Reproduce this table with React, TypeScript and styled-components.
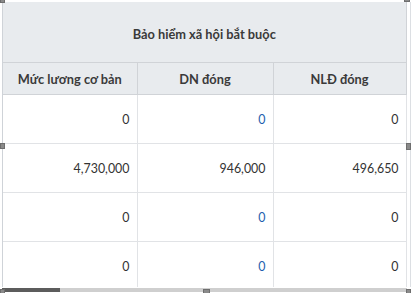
import styled, { createGlobalStyle } from 'styled-components';

const Global = createGlobalStyle`
    html, body {
        margin: 0;
        padding: 0;
        background: #ffffff;
    }
    body {
        font-family: Lato, "Open Sans", Arial, sans-serif;
        color: #333333;
    }
`;

const Frame = styled.div`
    position: relative;
    width: 411px;
    height: 293px;
    overflow: hidden;
    display: flex;
    flex-direction: column;
    padding-top: 2px;
    box-sizing: border-box;
`;

const Body = styled.div`
    display: flex;
    flex: 1;
    min-height: 0;
`;

const Viewport = styled.div`
    width: 404px;
    margin-left: 2px;
    border-left: 1px solid #cfd3d8;
    overflow: hidden;
`;

const SideStrip = styled.div`
    width: 2px;
    margin-left: 1px;
    border-right: 1px solid #dcdfe3;
`;

const Table = styled.table`
    border-collapse: collapse;
    table-layout: fixed;
    width: 403px;
    font-size: 13px;
`;

const HeadCell = styled.th<{ $tall?: boolean }>`
    background: #e8ebee;
    color: #3a3a3a;
    font-weight: 700;
    font-size: 12.8px;
    text-align: center;
    height: ${(p) => (p.$tall ? '57px' : '31px')};
    padding: ${(p) => (p.$tall ? '3px 4px 0' : '0 4px')};
    border: 1px solid #d0d3d7;
    border-top: none;
    border-left: none;
`;

const Cell = styled.td<{ $link?: boolean }>`
    text-align: right;
    height: 47px;
    padding: 1px 7px 0 4px;
    font-size: 12.4px;
    border: 1px solid #e1e3e6;
    border-top: none;
    border-left: none;
    color: ${(p) => (p.$link ? '#1f5fae' : '#333333')};
`;

const ScrollTrack = styled.div`
    height: 4px;
    margin: 1px 4px 1px 2px;
    background: #cfcfcf;
    display: flex;
`;

const ScrollThumb = styled.div`
    width: 58px;
    background: #5c5c5c;
`;

const Handle = styled.div<{ $x: number; $y: number; $w: number; $h: number }>`
    position: absolute;
    left: ${(p) => p.$x}px;
    top: ${(p) => p.$y}px;
    width: ${(p) => p.$w}px;
    height: ${(p) => p.$h}px;
    background: #8a8a8a;
    border: 1px solid #6e6e6e;
    box-sizing: border-box;
`;

const rows = [
    ['0', '0', '0'],
    ['4,730,000', '946,000', '496,650'],
    ['0', '0', '0'],
    ['0', '0', '0'],
];

const handles = [
    { x: 0, y: -2, w: 5, h: 5 },
    { x: 404, y: -3, w: 6, h: 5 },
    { x: 0, y: 143, w: 5, h: 6 },
    { x: 406, y: 143, w: 5, h: 7 },
    { x: 0, y: 289, w: 5, h: 6 },
    { x: 203, y: 289, w: 7, h: 6 },
    { x: 406, y: 289, w: 5, h: 6 },
];

export default function App() {
    return (
        <>
            <Global />
            <Frame>
                <Body>
                    <Viewport>
                        <Table>
                            <colgroup>
                                <col style={{ width: 134 }} />
                                <col style={{ width: 136 }} />
                                <col style={{ width: 133 }} />
                            </colgroup>
                            <thead>
                                <tr>
                                    <HeadCell $tall colSpan={3}>
                                        Bảo hiểm xã hội bắt buộc
                                    </HeadCell>
                                </tr>
                                <tr>
                                    <HeadCell>Mức lương cơ bản</HeadCell>
                                    <HeadCell>DN đóng</HeadCell>
                                    <HeadCell>NLĐ đóng</HeadCell>
                                </tr>
                            </thead>
                            <tbody>
                                {rows.map((r, i) => (
                                    <tr key={i}>
                                        {r.map((v, j) => (
                                            <Cell key={j} $link={j === 1 && v === '0'}>
                                                {v}
                                            </Cell>
                                        ))}
                                    </tr>
                                ))}
                            </tbody>
                        </Table>
                    </Viewport>
                    <SideStrip />
                </Body>
                <ScrollTrack>
                    <ScrollThumb />
                </ScrollTrack>
                {handles.map((h, i) => (
                    <Handle key={i} $x={h.x} $y={h.y} $w={h.w} $h={h.h} />
                ))}
            </Frame>
        </>
    );
}
